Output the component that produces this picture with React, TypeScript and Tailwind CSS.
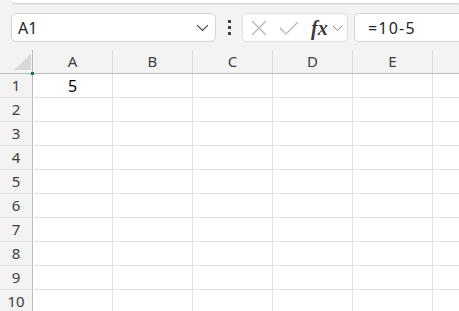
import React from 'react'

const cols = ['A', 'B', 'C', 'D', 'E', '']
const rows = [1, 2, 3, 4, 5, 6, 7, 8, 9, 10]

export default function App() {
  return (
    <div className="w-[459px] h-[311px] overflow-hidden bg-[#f3f3f3] text-[#262626]" style={{ fontFamily: '"Noto Sans", "Open Sans", sans-serif' }}>
      {/* ribbon bottom edge */}
      <div className="h-[3px] ml-[12px] bg-white rounded-bl-[6px] shadow-[0_1px_2px_rgba(0,0,0,0.18)]" />

      {/* formula bar */}
      <div className="flex items-center h-[47px] pt-[2px]">
        <div className="ml-[11px] w-[205px] h-[29px] bg-white border border-[#d6d6d6] rounded-[5px] flex items-center pl-[6px] pr-[6px]">
          <span className="text-[16px] flex-1">A1</span>
          <svg width="13" height="8" viewBox="0 0 13 8" fill="none">
            <path d="M1 1.2 L6.5 6.5 L12 1.2" stroke="#404040" strokeWidth="1.1" />
          </svg>
        </div>
        <div className="w-[26px] flex flex-col items-center gap-[3px]">
          <div className="w-[3px] h-[3px] bg-[#404040]" />
          <div className="w-[3px] h-[3px] bg-[#404040]" />
          <div className="w-[3px] h-[3px] bg-[#404040]" />
        </div>
        <div className="w-[106px] h-[29px] bg-white border border-[#dedede] rounded-[5px] flex items-center pl-[6px]">
          <svg width="18" height="18" viewBox="0 0 18 18" fill="none" className="ml-[1px]">
            <path d="M2 2 L16 16 M16 2 L2 16" stroke="#b4b4b4" strokeWidth="1.2" />
          </svg>
          <svg width="20" height="16" viewBox="0 0 20 16" fill="none" className="ml-[11px]">
            <path d="M1 8 L7 14 L19 2" stroke="#b4b4b4" strokeWidth="1.2" />
          </svg>
          <span className="ml-[12px] text-[20px] italic font-bold text-[#3a3a3a] leading-none" style={{ fontFamily: '"Liberation Serif", "DejaVu Serif", serif' }}>fx</span>
          <svg width="11" height="7" viewBox="0 0 11 7" fill="none" className="ml-[4px] mt-[2px]">
            <path d="M1 1 L5.5 5.5 L10 1" stroke="#8a8a8a" strokeWidth="1" />
          </svg>
        </div>
        <div className="ml-[6px] flex-1 h-[29px] bg-white border border-[#d6d6d6] rounded-l-[5px] border-r-0 flex items-center pl-[13px]">
          <span className="text-[16px] tracking-[1.2px]">=10-5</span>
        </div>
      </div>

      {/* grid */}
      <div className="bg-white">
        <div className="flex h-[24px] bg-[#f3f3f3] border-b border-[#b9b9b9]">
          <div className="w-[33px] shrink-0 border-r border-[#b9b9b9] relative">
            <div className="absolute left-[14px] top-[4px] w-[17px] h-[16px] bg-[#d9d9d9] [clip-path:polygon(100%_0,100%_100%,0_100%)]" />
            <div className="absolute right-[-2px] bottom-[-2px] w-[3px] h-[3px] bg-[#1e7145]" />
          </div>
          {cols.map((c, i) => (
            <div key={i} className="w-[80px] shrink-0 border-r border-[#dadada] flex items-center justify-center text-[15px] text-[#404040]">
              {c}
            </div>
          ))}
        </div>
        {rows.map((r) => (
          <div key={r} className="flex h-[24px] border-b border-[#e1e1e1]">
            <div className="w-[33px] shrink-0 bg-[#f3f3f3] border-r border-[#b9b9b9] flex items-center justify-center text-[15px] text-[#404040]">
              {r}
            </div>
            {cols.map((c, i) => (
              <div key={i} className="w-[80px] shrink-0 border-r border-[#e1e1e1] flex items-center justify-center text-[16px] text-black">
                {r === 1 && i === 0 ? '5' : ''}
              </div>
            ))}
          </div>
        ))}
      </div>
    </div>
  )
}
